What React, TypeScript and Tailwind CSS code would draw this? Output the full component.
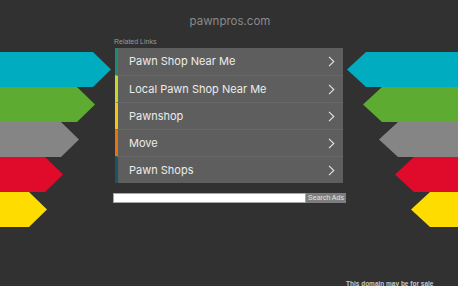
import React from "react";

const links = [
  { label: "Pawn Shop Near Me", color: "border-[#1d8b6f]" },
  { label: "Local Pawn Shop Near Me", color: "border-[#c9d62c]" },
  { label: "Pawnshop", color: "border-[#f3c70f]" },
  { label: "Move", color: "border-[#e9720e]" },
  { label: "Pawn Shops", color: "border-[#1c5368]" },
];

function Chevron() {
  return (
    <svg width="7" height="11" viewBox="0 0 7 11" className="shrink-0">
      <path d="M1 0.8 L5.8 5.5 L1 10.2" fill="none" stroke="#e4e4e4" strokeWidth="1.1" />
    </svg>
  );
}

export default function App() {
  return (
    <div className="w-[458px] h-[286px] bg-[#313131] flex flex-col overflow-hidden" style={{ fontFamily: "Inter, 'Noto Sans', sans-serif" }}>
      <div className="flex">
        <svg width="113" height="240" viewBox="0 0 113 240" className="shrink-0">
          <polygon points="0,52 93,52 111,69.5 93,87 0,87" fill="#00acbf" />
          <polygon points="0,87 77,87 95,104.5 77,122 0,122" fill="#5dab31" />
          <polygon points="0,122 61,122 79,139.5 61,157 0,157" fill="#858585" />
          <polygon points="0,157 45,157 63,174.5 45,192 0,192" fill="#e00b2b" />
          <polygon points="0,192 29,192 47,209.5 29,227 0,227" fill="#ffdc00" />
        </svg>
        <div className="w-[234px] shrink-0 flex flex-col">
          <div className="pt-[14px] h-[37px] text-center text-[11.5px] leading-[14px] text-[#8a8a8a]">pawnpros.com</div>
          <div className="ml-[1px] text-[7px] leading-[9px] text-[#9a9a9a]" style={{ fontFamily: "'Liberation Sans', Arial, sans-serif" }}>Related Links</div>
          <div className="ml-[2px] mt-[2px] w-[228px] bg-[#5e5e5e] flex flex-col">
            {links.map((l, i) => (
              <div
                key={l.label}
                className={`h-[27px] flex items-center justify-between border-l-[3px] ${l.color} pl-[11px] pr-[8px] ${i > 0 ? "border-t border-t-[#686868]" : ""}`}
              >
                <span className="text-[11px] text-[#ececec]">{l.label}</span>
                <Chevron />
              </div>
            ))}
          </div>
          <div className="mt-[10px] flex h-[10px]">
            <div className="w-[193px] bg-white border border-[#a5a5a5]"></div>
            <div className="w-[40px] bg-[#7d7d7d] text-[#e2e2e2] text-[7px] leading-[10px] text-center" style={{ fontFamily: "'Liberation Sans', Arial, sans-serif" }}>Search Ads</div>
          </div>
        </div>
        <svg width="111" height="240" viewBox="0 0 111 240" className="shrink-0">
          <polygon points="0,69.5 19,52 111,52 111,87 19,87" fill="#00acbf" />
          <polygon points="16,104.5 35,87 111,87 111,122 35,122" fill="#5dab31" />
          <polygon points="32,139.5 51,122 111,122 111,157 51,157" fill="#858585" />
          <polygon points="48,174.5 67,157 111,157 111,192 67,192" fill="#e00b2b" />
          <polygon points="64,209.5 83,192 111,192 111,227 83,227" fill="#ffdc00" />
        </svg>
      </div>
      <div className="mt-[39px] pl-[346px] text-[6.5px] font-bold leading-[9px] text-[#c8c8c8]" style={{ fontFamily: "'Liberation Sans', Arial, sans-serif" }}>This domain may be for sale</div>
    </div>
  );
}
